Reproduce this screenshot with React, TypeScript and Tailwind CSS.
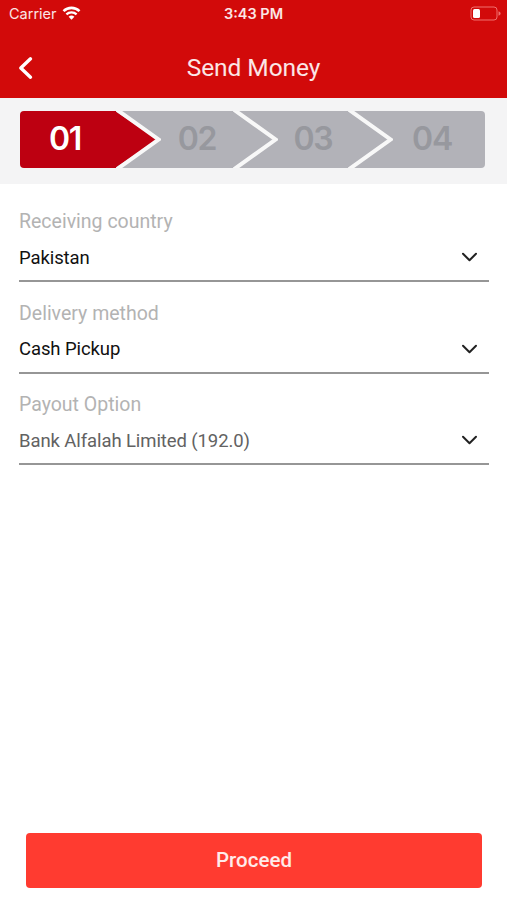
import { useState } from "react";
import clsx from "clsx";

interface SelectFieldProps {
  label: string;
  value: string;
  muted?: boolean;
}

interface StepArrowProps {
  active?: boolean;
}

const fields: SelectFieldProps[] = [
  { label: "Receiving country", value: "Pakistan" },
  { label: "Delivery method", value: "Cash Pickup" },
  { label: "Payout Option", value: "Bank Alfalah Limited (192.0)", muted: true },
];

function WifiIcon() {
  return (
    <svg className="-mt-[2px] ml-[5px] h-[14px] w-[19px]" viewBox="0 0 18 14" fill="none">
      <path d="M1 5.1a11.6 11.6 0 0 1 16 0" stroke="white" strokeWidth="2.6" />
      <path d="M3.9 8.4a7.4 7.4 0 0 1 10.2 0" stroke="white" strokeWidth="2.3" />
      <path d="M9 13.8 6.1 10.8a4.2 4.2 0 0 1 5.8 0Z" fill="white" />
    </svg>
  );
}

function BatteryIcon() {
  return (
    <svg className="h-[15px] w-[32px]" viewBox="0 0 32 15" fill="none">
      <rect x="1" y="1" width="26" height="13" rx="3" stroke="#f0716f" strokeWidth="1" />
      <rect x="3" y="3" width="7" height="9" rx="1.5" fill="white" />
      <path d="M28.5 5.2v4.6c1.4-.5 2.1-1.3 2.1-2.3s-.7-1.8-2.1-2.3Z" fill="#f0716f" />
    </svg>
  );
}

function StatusBar() {
  return (
    <div className="grid h-[27px] grid-cols-3 items-center font-['Inter',sans-serif] text-white">
      <div className="flex items-center pl-[9px]">
        <span className="text-[14.5px] text-white/90">Carrier</span>
        <WifiIcon />
      </div>
      <span className="pt-px text-center text-[14.5px] font-semibold text-white/90">3:43 PM</span>
      <div className="flex justify-end pr-[5px]">
        <BatteryIcon />
      </div>
    </div>
  );
}

function Header() {
  return (
    <header className="h-[98px] bg-[#d20a0a]">
      <StatusBar />
      <div className="grid h-[82px] grid-cols-[60px_1fr_60px] items-center">
        <button className="pl-[18px]" aria-label="Back">
          <svg className="h-[24px] w-[16px]" viewBox="0 0 16 24" fill="none">
            <path
              d="M12.5 2.8 2.8 12l9.7 9.2"
              stroke="white"
              strokeWidth="3.4"
              strokeLinecap="round"
              strokeLinejoin="round"
            />
          </svg>
        </button>
        <h1 className="text-center text-[24.5px] tracking-[-0.003em] text-white/90">Send Money</h1>
      </div>
    </header>
  );
}

function StepArrow({ active }: StepArrowProps) {
  return (
    <svg className="h-[57px] w-[45px] shrink-0" viewBox="0 0 45 57">
      <rect width="45" height="57" fill="#b2b2b8" />
      <path d="M-1 0 42 28.5-1 57Z" fill={active ? "#bd0011" : "#b2b2b8"} />
      <path d="M0-2 42.5 28.5 0 59" fill="none" stroke="#f8f8f8" strokeWidth="4" />
    </svg>
  );
}

function Steps() {
  const label = "text-[32px] leading-none font-semibold tracking-[-0.04em] font-['Inter',sans-serif]";

  return (
    <div className="h-[86px] bg-[#f4f4f5] pt-[12.5px] pl-[20px]">
      <div className="flex h-[57px] w-[465px] overflow-hidden rounded-[4px]">
        <div className="flex w-[96px] items-center justify-center bg-[#bd0011] pr-[6px]">
          <span className={clsx(label, "text-white")}>01</span>
        </div>
        <StepArrow active />
        <div className="flex w-[72px] items-center justify-center bg-[#b2b2b8]">
          <span className={clsx(label, "text-[#97989e]")}>02</span>
        </div>
        <StepArrow />
        <div className="flex w-[70px] items-center justify-center bg-[#b2b2b8]">
          <span className={clsx(label, "text-[#97989e]")}>03</span>
        </div>
        <StepArrow />
        <div className="flex flex-1 items-center justify-center bg-[#b2b2b8] pr-[14px]">
          <span className={clsx(label, "text-[#97989e]")}>04</span>
        </div>
      </div>
    </div>
  );
}

function SelectField({ label, value, muted }: SelectFieldProps) {
  return (
    <div className="mb-[17.6px] h-[74px] border-b-2 border-[#969696]">
      <div className="pt-px text-[19.5px] leading-[26px] text-[#b3b3b3]">{label}</div>
      <button className="mt-[9px] flex h-[26px] w-full items-center justify-between pr-[11px]">
        <span
          className={clsx(
            "pt-[3px] text-[18.5px] tracking-[-0.005em]",
            muted ? "text-[#626262]" : "text-[#111111]"
          )}
        >
          {value}
        </span>
        <svg className="h-[10px] w-[17px]" viewBox="0 0 17 10" fill="none">
          <path
            d="M2 1.7 8.5 8.2 15 1.7"
            stroke="#222222"
            strokeWidth="2"
            strokeLinecap="round"
            strokeLinejoin="round"
          />
        </svg>
      </button>
    </div>
  );
}

export default function App() {
  const [submitting, setSubmitting] = useState(false);

  return (
    <div className="flex h-[900px] w-[507px] flex-col bg-white font-['Roboto',sans-serif]">
      <Header />
      <Steps />

      <main className="flex-1 pt-[24.2px] pr-[18px] pl-[19px]">
        {fields.map((field) => (
          <SelectField key={field.label} {...field} />
        ))}
      </main>

      <footer className="pr-[25px] pb-[12px] pl-[26px]">
        <button
          className="h-[55px] w-full rounded-[4px] bg-[#ff3b30] text-[20.5px] font-medium text-white/90"
          disabled={submitting}
          onClick={() => setSubmitting(true)}
        >
          Proceed
        </button>
      </footer>
    </div>
  );
}
